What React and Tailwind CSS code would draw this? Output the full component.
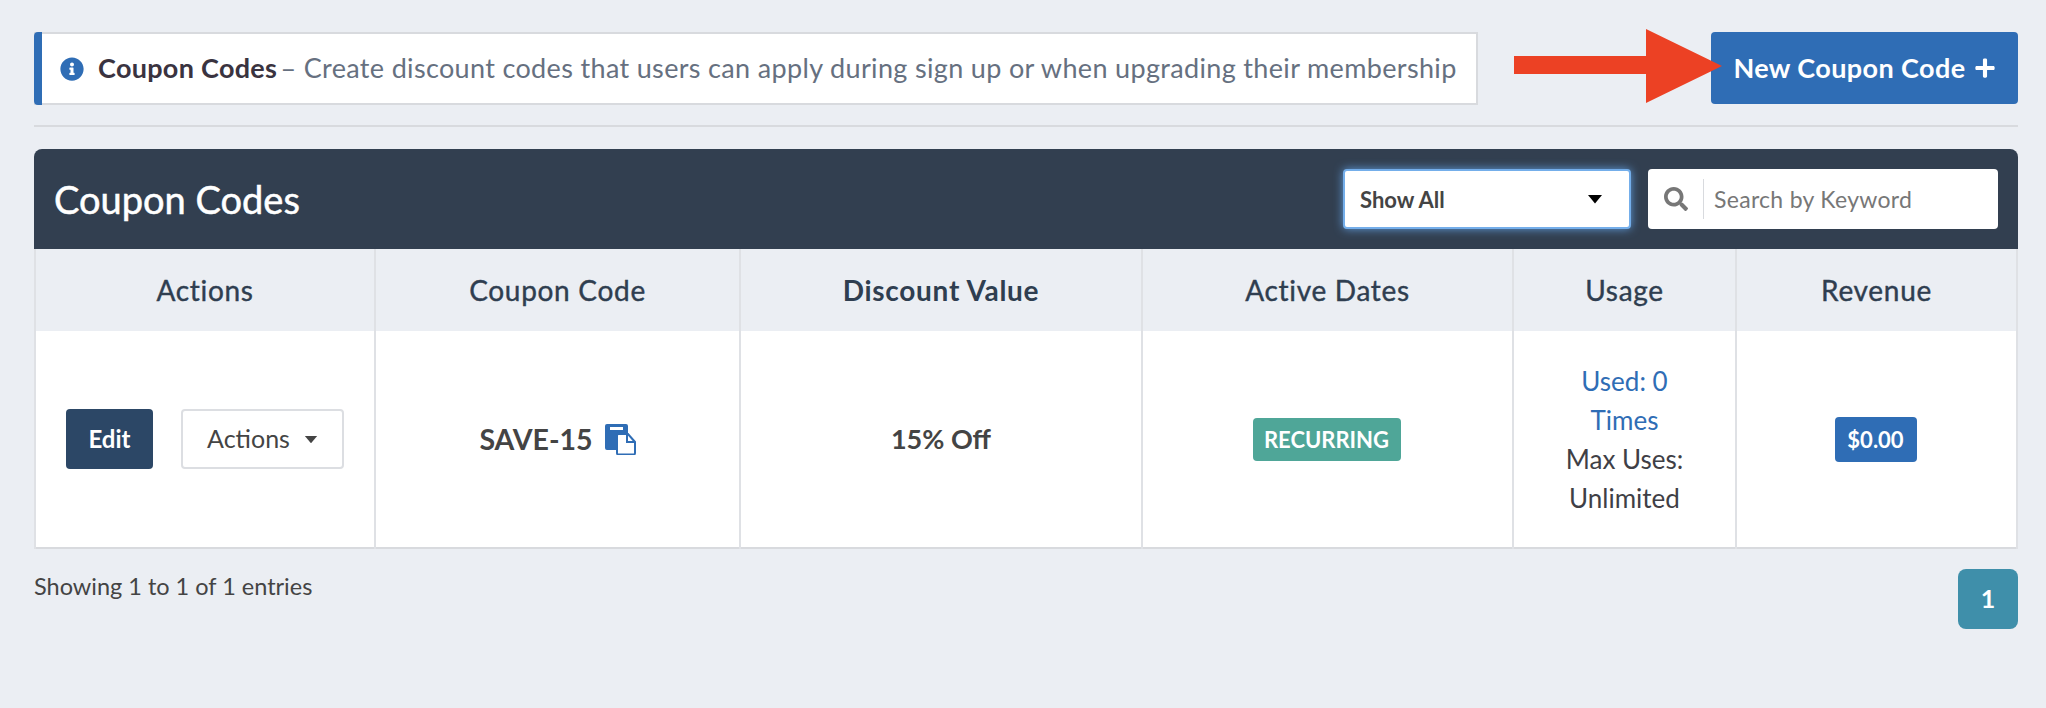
import { FaInfoCircle, FaPlus, FaSearch } from "react-icons/fa";

function CopyIcon() {
  return (
    <svg width="31" height="31" viewBox="0 0 31 31" className="shrink-0">
      <path d="M2 0h19a2 2 0 0 1 2 2v7h-6a2 2 0 0 0-2 2v15H2a2 2 0 0 1-2-2V2a2 2 0 0 1 2-2z" fill="#2f6db5" />
      <rect x="5" y="3" width="13" height="3" fill="#fff" />
      <path d="M13 10h10l7 8v11a1.500 1.500 0 0 1-1.500 1.500h-15A1.500 1.500 0 0 1 12 29V11z" fill="#fff" stroke="#2f6db5" strokeWidth="2" />
      <path d="M22 9v9h8" fill="none" stroke="#2f6db5" strokeWidth="2" />
    </svg>
  );
}

function Caret({ className }) {
  return (
    <svg viewBox="0 0 16 10" className={className}>
      <path d="M1 1h14L8 9.500z" fill="currentColor" />
    </svg>
  );
}

export default function App() {
  return (
    <div className="min-h-[708px] bg-[#ebeef3] pl-[34px] pr-[28px] pt-8 font-['Lato',sans-serif] text-[#3f3f46]">
      {/* Top bar */}
      <div className="relative flex justify-between border-b-2 border-[#d8dade] pb-[20px]">
        <div className="flex h-[73px] w-[1444px] items-center border-2 border-l-0 border-[#d8dade] bg-white">
          <div className="mr-[18px] h-[73px] w-2 shrink-0 rounded-l-sm bg-[#2f6db5]" />
          <FaInfoCircle className="mr-[14px] shrink-0 text-[24px] text-[#2f6db5]" />
          <p className="whitespace-nowrap text-[27px] tracking-[0.34px] text-[#667080]">
            <span className="-mr-1 font-bold tracking-[0.3px] text-[#3a3340]">Coupon Codes</span> – Create discount codes that users can apply during sign up or when upgrading their membership
          </p>
        </div>
        <svg width="208" height="74" viewBox="0 0 208 74" className="absolute left-[1480px] top-[-3px] z-10">
          <path d="M0 27h132V0l76 37-76 37V45H0z" fill="#ec4124" />
        </svg>
        <button className="flex h-[72px] w-[307px] items-center justify-center gap-2 rounded bg-[#2f6db5] text-[27px] font-bold tracking-[0.4px] text-white">
          New Coupon Code
          <FaPlus className="text-[22px]" />
        </button>
      </div>

      {/* Table header */}
      <div className="mt-[22px] flex h-[100px] items-center rounded-t-lg bg-[#323f50] pl-5 pr-5">
        <h1 className="text-[38px] text-white [-webkit-text-stroke:0.5px_#fff]">Coupon Codes</h1>
        <div className="ml-auto flex h-[60px] w-[288px] items-center justify-between rounded border-2 border-[#74aeea] bg-white pl-[15px] pr-[26px] text-[22px] font-bold text-[#444] shadow-[0_0_10px_#5f9ad8]">
          Show All
          <Caret className="w-4 text-black" />
        </div>
        <div className="ml-[17px] flex h-[60px] w-[350px] items-center rounded bg-white">
          <FaSearch className="ml-4 text-[24px] text-[#777]" />
          <div className="ml-[15px] h-10 w-px bg-[#d8dade]" />
          <span className="ml-[10px] text-[23px] tracking-[0.3px] text-[#777]">Search by Keyword</span>
        </div>
      </div>

      {/* Table */}
      <table className="w-full table-fixed border-collapse border-2 border-t-0 border-[#d8dade] bg-white text-center">
        <thead>
          <tr className="h-[82px] bg-[#ebeef3] text-[28px] tracking-[0.7px] text-[#2f3e50]">
            <th className="w-[340px] border-x-2 border-[#dfe1e5] font-normal [-webkit-text-stroke:0.4px_#2f3e50]">Actions</th>
            <th className="w-[365px] border-x-2 border-[#dfe1e5] font-normal [-webkit-text-stroke:0.4px_#2f3e50]">Coupon Code</th>
            <th className="w-[402px] border-x-2 border-[#dfe1e5] font-bold">Discount Value</th>
            <th className="w-[371px] border-x-2 border-[#dfe1e5] font-normal [-webkit-text-stroke:0.4px_#2f3e50]">Active Dates</th>
            <th className="w-[223px] border-x-2 border-[#dfe1e5] font-normal [-webkit-text-stroke:0.4px_#2f3e50]">Usage</th>
            <th className="border-x-2 border-[#dfe1e5] font-normal [-webkit-text-stroke:0.4px_#2f3e50]">Revenue</th>
          </tr>
        </thead>
        <tbody>
          <tr className="h-[217px]">
            <td className="border-x-2 border-[#dfe1e5]">
              <div className="flex justify-center gap-7">
                <button className="h-[60px] w-[87px] rounded bg-[#2c4766] text-[24px] font-bold text-white">Edit</button>
                <button className="flex h-[60px] w-[163px] items-center justify-center gap-3.5 rounded border-2 border-[#dcdee2] text-[25px] text-[#444]">
                  Actions
                  <Caret className="w-3.5 text-[#444]" />
                </button>
              </div>
            </td>
            <td className="border-x-2 border-[#dfe1e5]">
              <div className="flex items-center justify-center gap-3 text-[28.500px] font-bold text-[#444]">
                SAVE-15
                <CopyIcon />
              </div>
            </td>
            <td className="border-x-2 border-[#dfe1e5] text-[27px] font-bold text-[#444]">15% Off</td>
            <td className="border-x-2 border-[#dfe1e5]">
              <span className="mr-[2px] inline-flex h-[43px] w-[148px] items-center justify-center rounded bg-[#4fa698] text-[22px] font-bold text-white">RECURRING</span>
            </td>
            <td className="border-x-2 border-[#dfe1e5] pt-[2px] text-[26px] leading-[39px] text-[#3f3f46]">
              <div className="mx-auto w-[150px] text-[#2f6db5]">Used: 0 Times</div>
              <div className="mx-auto w-[150px]">Max Uses: Unlimited</div>
            </td>
            <td className="border-x-2 border-[#dfe1e5]">
              <span className="mr-[2px] inline-flex h-[45px] w-[82px] items-center justify-center rounded bg-[#2f6db5] text-[22px] font-bold text-white">$0.00</span>
            </td>
          </tr>
        </tbody>
      </table>

      {/* Footer */}
      <div className="mt-[20px] flex items-start justify-between">
        <p className="text-[23.500px] text-[#444]">Showing 1 to 1 of 1 entries</p>
        <span className="flex h-[60px] w-[60px] items-center justify-center rounded-lg bg-[#3f8faa] text-[25px] font-bold text-white">1</span>
      </div>
    </div>
  );
}
